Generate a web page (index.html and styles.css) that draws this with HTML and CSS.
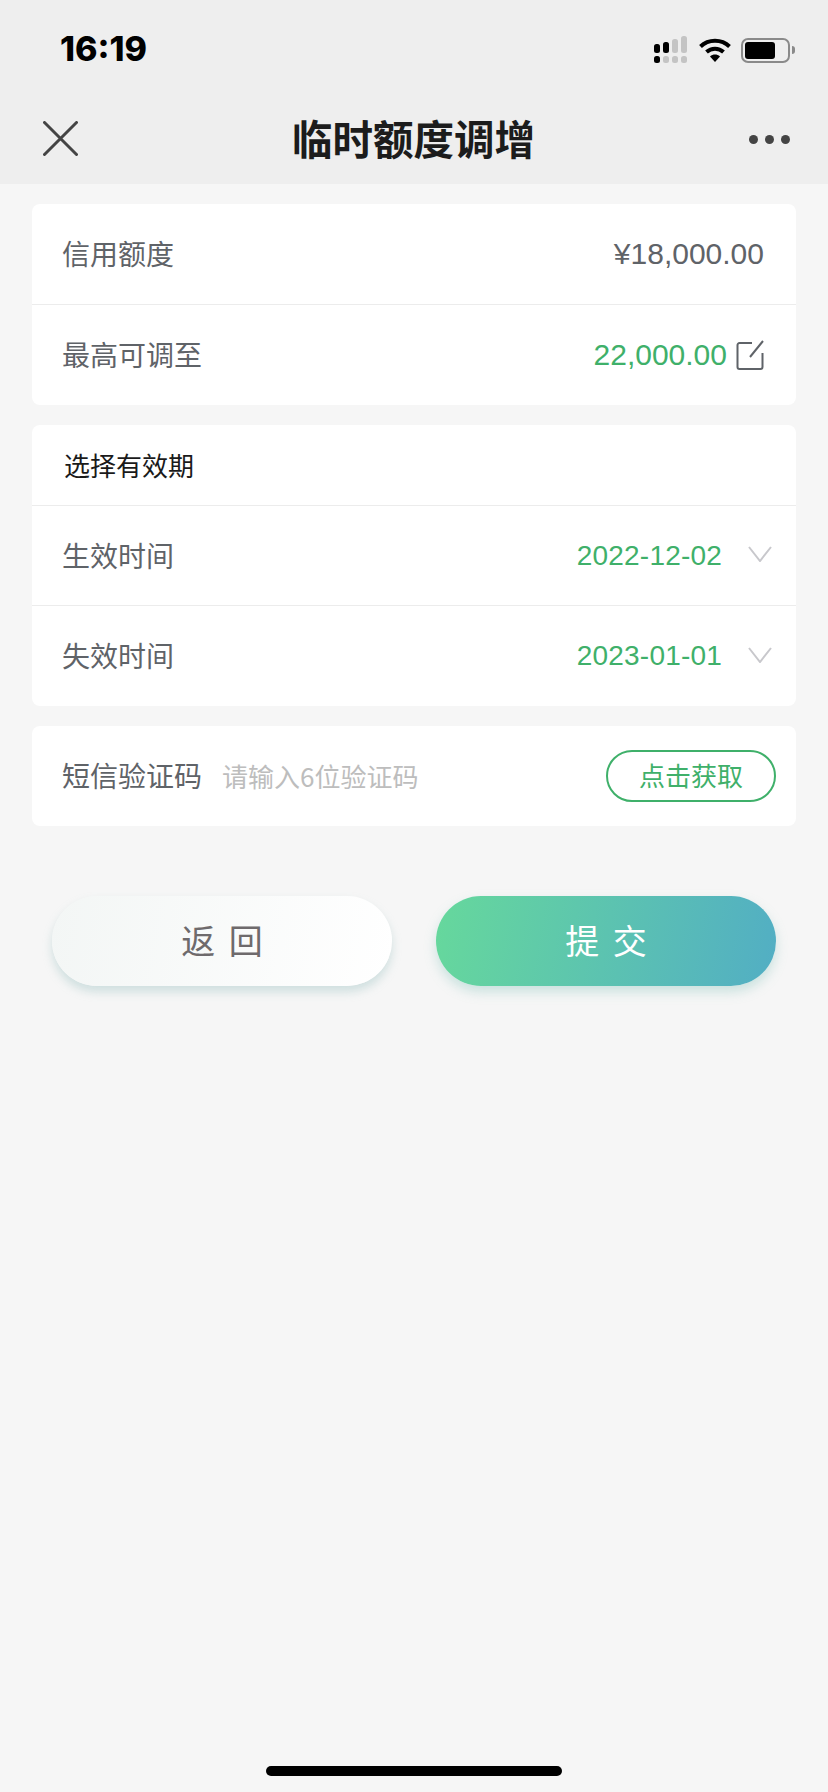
FILE: index.html
```html
<!DOCTYPE html>
<html lang="zh-CN">
<head>
    <meta charset="UTF-8">
    <meta name="viewport" content="width=device-width, initial-scale=1.0">
    <title>临时额度调增</title>
    <link rel="stylesheet" href="styles.css">
</head>
<body>
    <header class="top">
        <div class="status-bar">
            <span class="time">16:19</span>
            <div class="status-icons">
                <svg class="signal" width="34" height="28" viewBox="0 0 34 28">
                    <rect x="0" y="8" width="6" height="9" rx="2.5" fill="#000"/>
                    <rect x="9" y="6" width="6" height="11" rx="2.5" fill="#000"/>
                    <rect x="18" y="3" width="6" height="14" rx="2.5" fill="#c4c4c4"/>
                    <rect x="27" y="0" width="6" height="17" rx="2.5" fill="#c4c4c4"/>
                    <rect x="0" y="20" width="6" height="7" rx="2.5" fill="#000"/>
                    <rect x="9" y="20" width="6" height="7" rx="2.5" fill="#c4c4c4"/>
                    <rect x="18" y="20" width="6" height="7" rx="2.5" fill="#c4c4c4"/>
                    <rect x="27" y="20" width="6" height="7" rx="2.5" fill="#c4c4c4"/>
                </svg>
                <svg class="wifi" width="32" height="24" viewBox="0 0 32 24">
                    <path d="M1.5 8.5C9.5 .8 22.5 .8 30.5 8.5" fill="none" stroke="#000" stroke-width="4"/>
                    <path d="M7.5 14C12.3 9.6 19.7 9.6 24.500 14" fill="none" stroke="#000" stroke-width="4"/>
                    <path d="M11 18.500C14 15.900 18 15.900 21 18.500L16 24Z" fill="#000"/>
                </svg>
                <div class="battery"><div class="battery-level"></div></div>
                <div class="battery-tip"></div>
            </div>
        </div>
        <div class="nav-bar">
            <svg class="close" width="35" height="35" viewBox="0 0 35 35">
                <path d="M1.500 1.500L33.500 33.500M33.500 1.500L1.500 33.500" stroke="#444" stroke-width="3" stroke-linecap="round"/>
            </svg>
            <h1>临时额度调增</h1>
            <div class="more"><i></i><i></i><i></i></div>
        </div>
    </header>

    <main class="content">
        <section class="card">
            <div class="row">
                <span class="label">信用额度</span>
                <span class="value">¥18,000.00</span>
            </div>
            <div class="row">
                <span class="label">最高可调至</span>
                <div class="value-wrap">
                    <span class="value green">22,000.00</span>
                    <svg class="edit" width="28" height="30" viewBox="0 0 28 30">
                        <path d="M16 3H3.500A2 2 0 0 0 1.500 5V27A2 2 0 0 0 3.500 29H24.500A2 2 0 0 0 26.500 27V13" fill="none" stroke="#5f6368" stroke-width="2"/>
                        <path d="M14 17L27 1" fill="none" stroke="#5f6368" stroke-width="2"/>
                    </svg>
                </div>
            </div>
        </section>

        <section class="card">
            <div class="row card-title">选择有效期</div>
            <div class="row">
                <span class="label">生效时间</span>
                <div class="value-wrap date">
                    <span class="value green">2022-12-02</span>
                    <svg class="arrow" width="24" height="16" viewBox="0 0 24 16">
                        <path d="M1 1L12 15L23 1" fill="none" stroke="#c8c8cc" stroke-width="2"/>
                    </svg>
                </div>
            </div>
            <div class="row">
                <span class="label">失效时间</span>
                <div class="value-wrap date">
                    <span class="value green">2023-01-01</span>
                    <svg class="arrow" width="24" height="16" viewBox="0 0 24 16">
                        <path d="M1 1L12 15L23 1" fill="none" stroke="#c8c8cc" stroke-width="2"/>
                    </svg>
                </div>
            </div>
        </section>

        <section class="card">
            <div class="row code-row">
                <span class="label">短信验证码</span>
                <span class="placeholder">请输入6位验证码</span>
                <button class="code-btn">点击获取</button>
            </div>
        </section>

        <div class="actions">
            <button class="btn btn-back">返 回</button>
            <button class="btn btn-submit">提 交</button>
        </div>
    </main>

    <div class="home-bar"></div>
</body>
</html>
```

FILE: styles.css
```css
* {
    margin: 0;
    padding: 0;
    box-sizing: border-box;
    font-family: "Liberation Sans", "Noto Sans CJK SC", sans-serif;
}

body {
    width: 828px;
    height: 1792px;
    background: #f6f6f6;
    position: relative;
    overflow: hidden;
}

.top {
    height: 184px;
    background: #eeeeee;
}

.status-bar {
    height: 96px;
    padding: 31px 33px 0 60px;
    display: flex;
    justify-content: space-between;
    align-items: flex-start;
}

.time {
    font-family: "Inter", sans-serif;
    font-size: 34px;
    font-weight: 800;
    line-height: 36px;
    color: #000;
}

.status-icons {
    display: flex;
    align-items: center;
    margin-top: 5px;
}

.signal {
    margin-right: 11px;
}

.wifi {
    margin-right: 10px;
}

.battery {
    width: 49px;
    height: 25px;
    border: 2px solid #8a8a8a;
    border-radius: 7px;
    padding: 2px;
}

.battery-level {
    width: 30px;
    height: 17px;
    background: #000;
    border-radius: 3px;
}

.battery-tip {
    width: 3px;
    height: 8px;
    margin-left: 2px;
    background: #8a8a8a;
    border-radius: 0 3px 3px 0;
}

.nav-bar {
    height: 88px;
    padding: 0 38px 0 43px;
    display: flex;
    justify-content: space-between;
    align-items: center;
}

.close {
    margin-top: -4px;
}

.nav-bar h1 {
    font-family: "Noto Sans CJK SC", sans-serif;
    font-size: 40.5px;
    font-weight: 700;
    color: #1c1c1c;
    line-height: 48px;
    margin-top: -4px;
}

.more {
    display: flex;
    gap: 7px;
    width: 41px;
    margin-top: -2px;
}

.more i {
    display: block;
    width: 9px;
    height: 9px;
    border-radius: 50%;
    background: #444;
}

.content {
    padding: 20px 32px 0;
}

.card {
    background: #fff;
    border-radius: 8px;
    margin-bottom: 20px;
}

.row {
    height: 100px;
    padding: 0 32px 0 30px;
    display: flex;
    justify-content: space-between;
    align-items: center;
    border-bottom: 1px solid #ececec;
}

.row:first-child {
    height: 101px;
}

.row:last-child {
    border-bottom: none;
}

.label {
    font-family: "Noto Sans CJK SC", sans-serif;
    font-size: 28px;
    color: #5f6368;
    padding-bottom: 2px;
}

.value {
    font-size: 30px;
    color: #5f6368;
}

.green {
    color: #3fb06a;
}

.value-wrap {
    display: flex;
    align-items: center;
    gap: 9px;
}

.value-wrap.date {
    gap: 26px;
    margin-right: -8px;
}

.date .value {
    font-size: 28px;
    letter-spacing: 0.2px;
}

.arrow {
    margin-top: -3px;
}

.row.card-title {
    height: 81px;
    padding-left: 32px;
    padding-bottom: 2px;
    font-family: "Noto Sans CJK SC", sans-serif;
    font-size: 26px;
    color: #1a1a1a;
}

.row.code-row {
    height: 100px;
    justify-content: flex-start;
    padding-right: 20px;
}

.placeholder {
    margin-left: 20px;
    padding-bottom: 2px;
    font-family: "Noto Sans CJK SC", sans-serif;
    font-size: 26px;
    color: #bdbdbd;
}

.code-btn {
    margin-left: auto;
    width: 170px;
    height: 52px;
    padding-bottom: 4px;
    border: 2px solid #3fb06a;
    border-radius: 26px;
    background: #fff;
    color: #3fb06a;
    font-family: "Noto Sans CJK SC", sans-serif;
    font-size: 26px;
}

.actions {
    display: flex;
    justify-content: space-between;
    padding: 50px 20px 0;
}

.btn {
    width: 340px;
    height: 90px;
    padding: 0 0 3px 3px;
    border: none;
    border-radius: 45px;
    font-family: "Noto Sans CJK SC", sans-serif;
    font-size: 34px;
    letter-spacing: 3px;
}

.btn-back {
    background: linear-gradient(100deg, #f3f6f5, #ffffff);
    color: #6e6a6c;
    box-shadow: 0 6px 10px rgba(150, 190, 190, 0.4);
}

.btn-submit {
    background: linear-gradient(100deg, #66d89c, #52aec4);
    color: #fff;
    box-shadow: 0 6px 12px rgba(120, 190, 180, 0.35);
}

.home-bar {
    position: absolute;
    left: 266px;
    bottom: 16px;
    width: 296px;
    height: 10px;
    border-radius: 5px;
    background: #000;
}
```
